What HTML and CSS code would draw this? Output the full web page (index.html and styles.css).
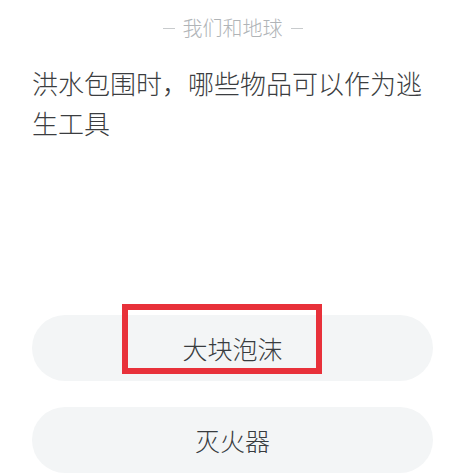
FILE: index.html
```html
<!DOCTYPE html>
<html lang="zh">
<head>
<meta charset="utf-8">
<link rel="stylesheet" href="styles.css">
</head>
<body>
<div class="page">
  <div class="header"><span class="dash"></span><span class="title">我们和地球</span><span class="dash"></span></div>
  <div class="question">洪水包围时，哪些物品可以作为逃生工具</div>
  <div class="options">
    <div class="option">大块泡沫<span class="mark"></span></div>
    <div class="option">灭火器</div>
  </div>
</div>
</body>
</html>
```
FILE: styles.css
```css
html, body {
  margin: 0;
  padding: 0;
  background: #ffffff;
}
body {
  font-family: "Noto Sans CJK SC", "Noto Sans", sans-serif;
  width: 475px;
  height: 475px;
  overflow: hidden;
}
.page {
  padding: 0 42px 0 32px;
}
.header {
  display: flex;
  align-items: center;
  justify-content: center;
  gap: 8px;
  height: 28px;
  margin-top: 14px;
  color: #b0b4b7;
  font-size: 20px;
  font-weight: 300;
  line-height: 28px;
}
.dash {
  width: 12px;
  height: 1px;
  background: #c8cbcd;
}
.question {
  margin-top: 21px;
  font-size: 26px;
  font-weight: 300;
  line-height: 40px;
  color: #3b3d40;
}
.options {
  margin-top: 172px;
  display: flex;
  flex-direction: column;
  gap: 26px;
}
.option {
  position: relative;
  height: 66px;
  border-radius: 33px;
  background: #f3f5f6;
  display: flex;
  align-items: center;
  justify-content: center;
  font-size: 25px;
  font-weight: 300;
  color: #383c3f;
}
.mark {
  position: absolute;
  left: 90px;
  top: -11px;
  width: 200px;
  height: 70px;
  box-sizing: border-box;
  border: 6px solid #e8313a;
}
```
